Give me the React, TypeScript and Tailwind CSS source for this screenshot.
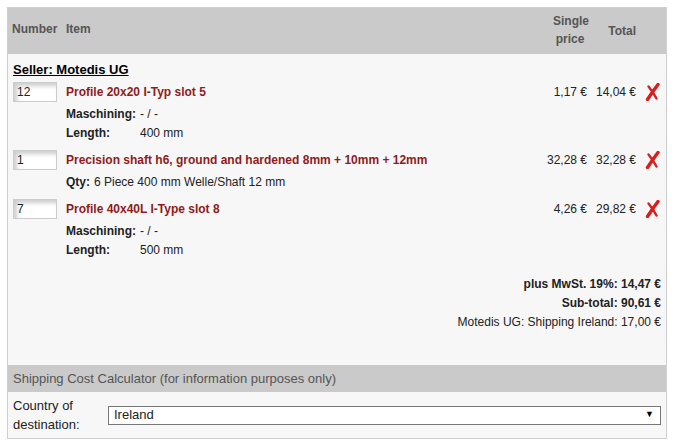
const items = [
  {
    qty: "12",
    title: "Profile 20x20 I-Typ slot 5",
    single: "1,17 €",
    total: "14,04 €",
    details: [
      { label: "Maschining:", value: "- / -", wide: false },
      { label: "Length:", value: "400 mm", wide: true },
    ],
  },
  {
    qty: "1",
    title: "Precision shaft h6, ground and hardened 8mm + 10mm + 12mm",
    single: "32,28 €",
    total: "32,28 €",
    details: [{ label: "Qty:", value: "6 Piece 400 mm Welle/Shaft 12 mm", wide: false }],
  },
  {
    qty: "7",
    title: "Profile 40x40L I-Type slot 8",
    single: "4,26 €",
    total: "29,82 €",
    details: [
      { label: "Maschining:", value: "- / -", wide: false },
      { label: "Length:", value: "500 mm", wide: true },
    ],
  },
];

const RemoveIcon = () => (
  <svg width="15" height="18" viewBox="0 0 15 18" className="block">
    <path d="M13 1.5 Q8 8 2.5 16.5" stroke="#d81e1e" strokeWidth="3.4" strokeLinecap="round" fill="none" />
    <path d="M3.5 3.5 Q8 9 11.5 15.5" stroke="#d81e1e" strokeWidth="2.4" strokeLinecap="round" fill="none" />
  </svg>
);

export default function App() {
  return (
    <div className="p-[7px] bg-white font-['Liberation_Sans',Arial,sans-serif] text-[12px] text-[#222]">
      <div className="w-[660px] border border-[#cfcfcf] bg-[#f7f7f7]">
        {/* header */}
        <div className="h-[46px] bg-[#cacaca] flex items-center font-bold text-[#555] leading-[18px]">
          <div className="w-[58px] pl-[4px] pb-[4px]">Number</div>
          <div className="flex-1 pb-[4px]">Item</div>
          <div className="w-[50px] pl-[12px] pr-[4px] pb-[2px] text-center">
            Single
            <br />
            price
          </div>
          <div className="w-[50px] pr-[5px] text-right">Total</div>
          <div className="w-[25px]" />
        </div>

        {/* cart body */}
        <div className="pt-[6px] pb-[33px]">
          <div className="pl-[5px] h-[19px] leading-[19px] text-[13px] font-bold text-black underline">
            Seller: Motedis UG
          </div>
          <div className="flex flex-col gap-[4px]">
            {items.map((it) => (
              <div key={it.title}>
                <div className="h-[26px] flex items-center">
                  <div className="w-[58px] pl-[5px]">
                    <div className="w-[44px] h-[20px] border border-[#ccc] bg-white shadow-[inset_3px_3px_4px_rgba(0,0,0,0.2)] pl-[3px] leading-[18px] text-[#222]">
                      {it.qty}
                    </div>
                  </div>
                  <div className="flex-1 font-bold text-[#8f1b1b]">{it.title}</div>
                  <div className="w-[60px] pr-[4px] text-right">{it.single}</div>
                  <div className="w-[50px] pr-[5px] text-right">{it.total}</div>
                  <div className="w-[25px] flex justify-start pl-[4px]">
                    <RemoveIcon />
                  </div>
                </div>
                {it.details.map((d) => (
                  <div key={d.label} className="pl-[58px] h-[19px] leading-[19px] flex">
                    <span className={d.wide ? "font-bold w-[74px]" : "font-bold mr-[4px]"}>{d.label}</span>
                    <span>{d.value}</span>
                  </div>
                ))}
              </div>
            ))}
          </div>

          <div className="mt-[15px] pr-[5px] flex flex-col items-end leading-[19px]">
            <div className="font-bold">plus MwSt. 19%: 14,47 €</div>
            <div className="font-bold">Sub-total: 90,61 €</div>
            <div>Motedis UG: Shipping Ireland: 17,00 €</div>
          </div>
        </div>

        {/* shipping calculator */}
        <div className="h-[27px] bg-[#cacaca] flex items-center pl-[5px] text-[13px] text-[#555]">
          Shipping Cost Calculator (for information purposes only)
        </div>
        <div className="h-[46px] flex items-center pl-[5px] pr-[5px] text-[13px]">
          <div className="w-[95px] leading-[19px]">
            Country of
            <br />
            destination:
          </div>
          <div className="flex-1 h-[19px] border border-[#777] bg-white flex items-center justify-between pl-[5px] pr-[6px]">
            <span>Ireland</span>
            <span className="text-[9px] text-black">▼</span>
          </div>
        </div>
      </div>
    </div>
  );
}
